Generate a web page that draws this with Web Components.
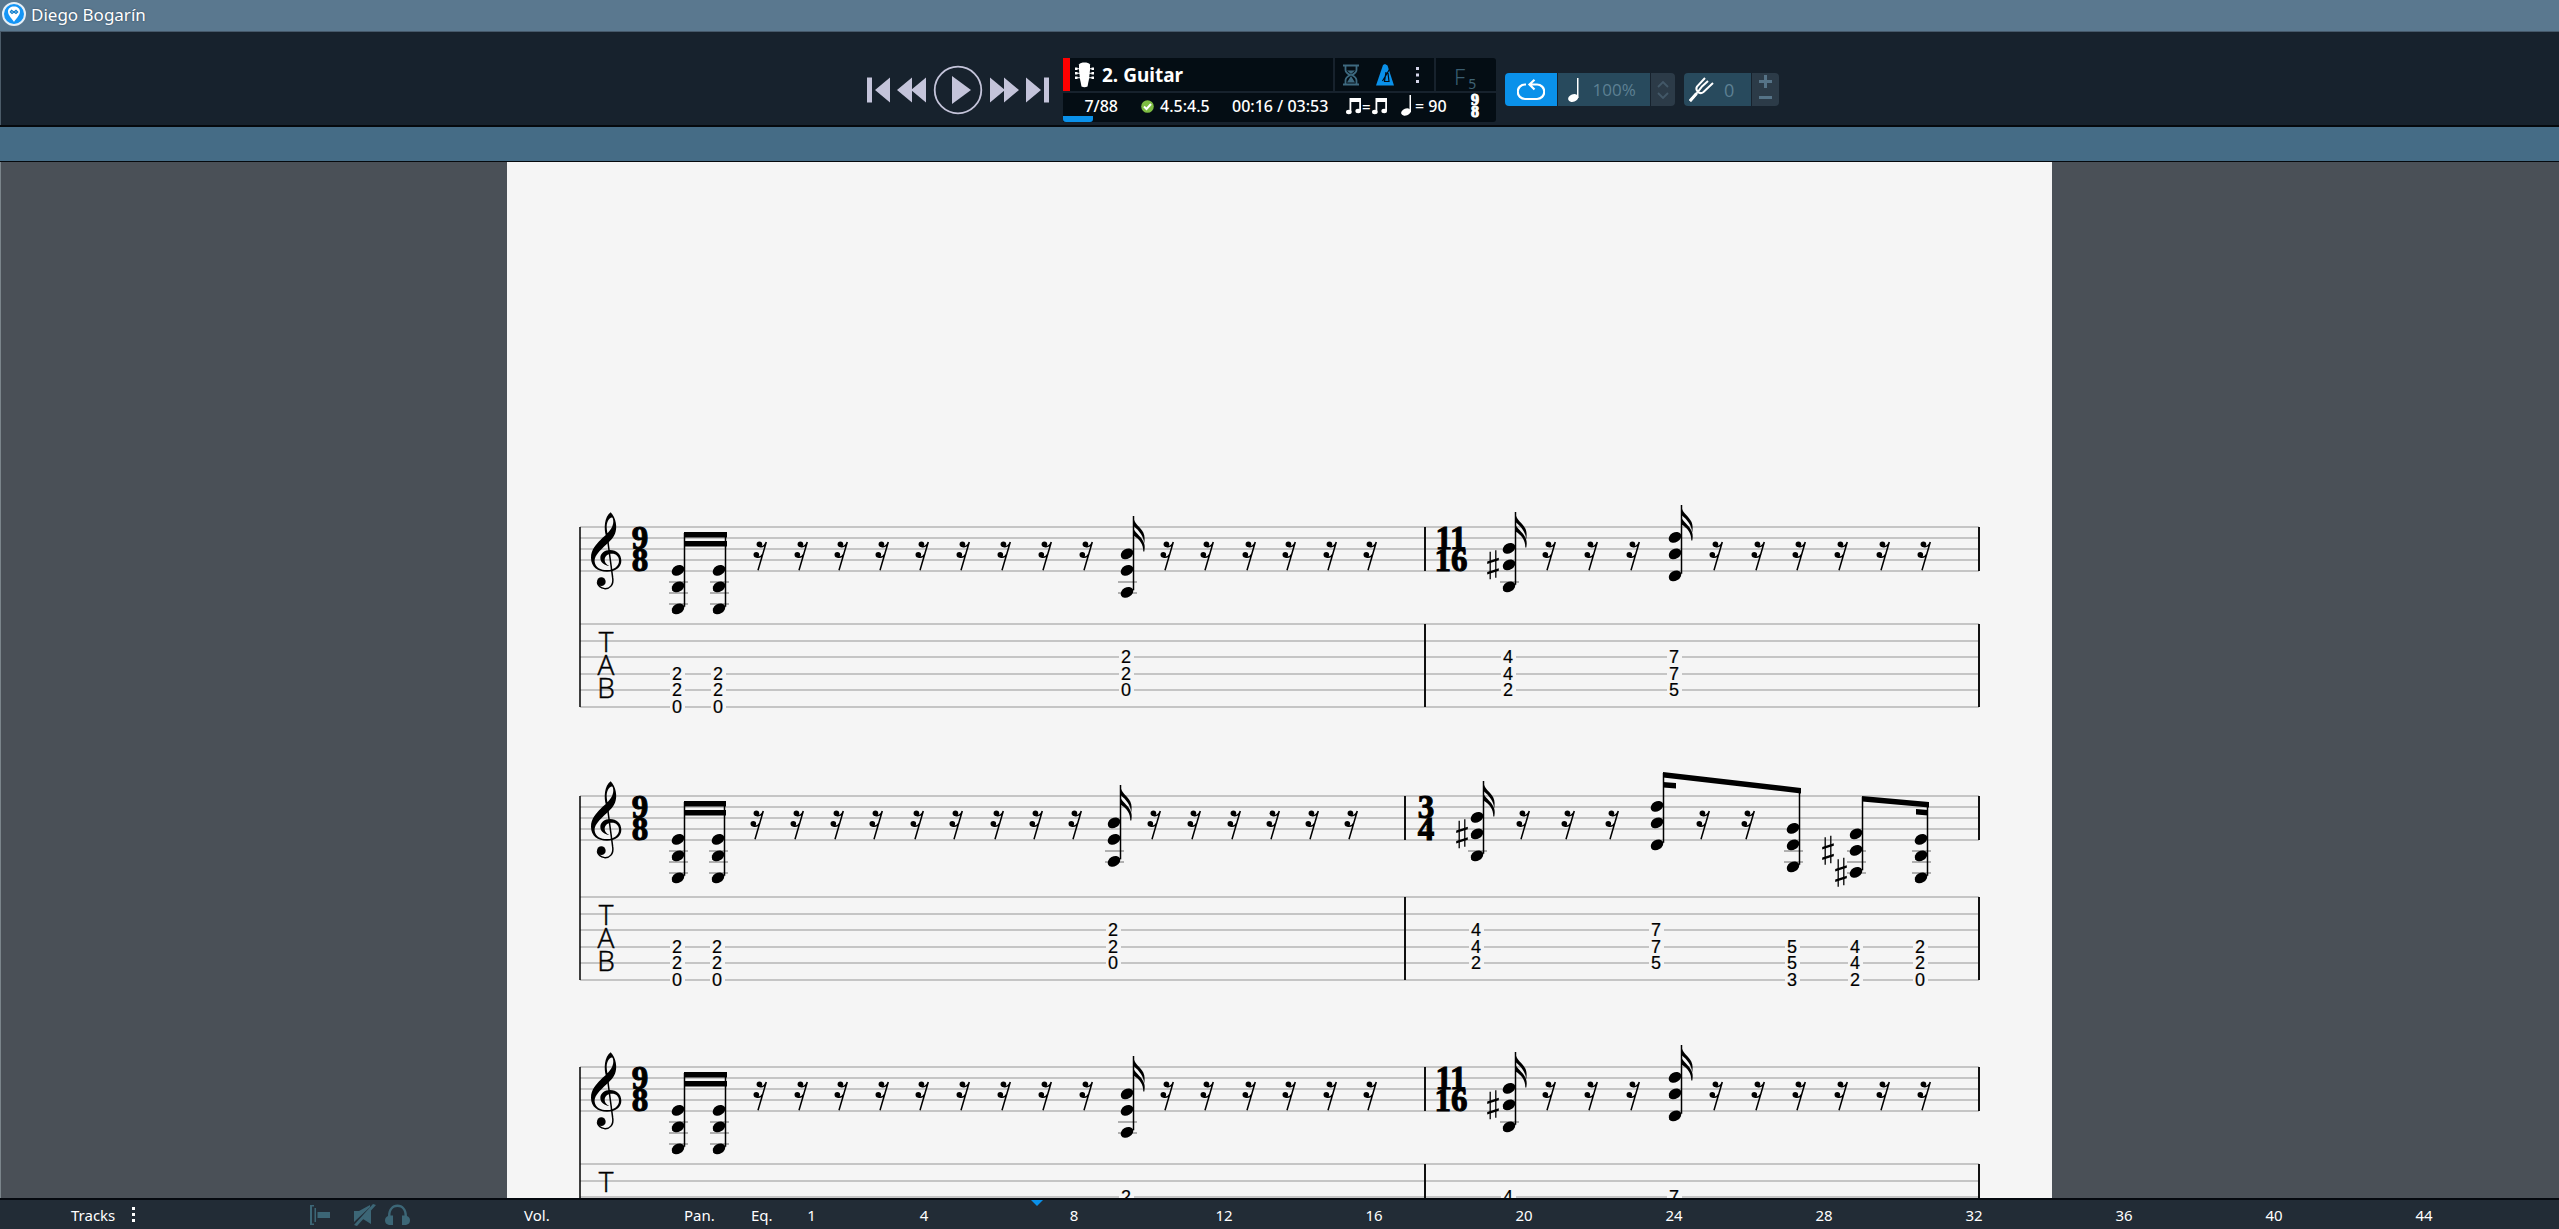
<!DOCTYPE html>
<html lang="en">
<head>
<meta charset="utf-8">
<title>Diego Bogarín</title>
<style>
html, body { margin: 0; height: 100%; }
body { font-family: "Noto Sans", "Open Sans", sans-serif; color: #fff; background: #4a5057; }
</style>
</head>
<body>
<tab-app></tab-app>
<script>
function define(name, css, html) {
  const t = document.createElement('template');
  t.innerHTML = `<style>*{box-sizing:border-box}button,input{font:inherit;color:inherit;border:0;padding:0;margin:0;background:none}svg{display:block;flex:none}${css}</style>${html}`;
  customElements.define(name, class extends HTMLElement {
    constructor() {
      super();
      this.attachShadow({ mode: 'open' }).append(t.content.cloneNode(true));
    }
  });
}

define('title-bar', `
:host { display: flex; align-items: center; gap: 5px; height: 32px; padding: 0 2px 2px; background: #5a788f; border-bottom: 1px solid #46596a; font-size: 17px; line-height: 24px; text-shadow: 0 0 2px #2c4257; }
`, `
<svg width="24" height="26" viewBox="0 0 24 26"><circle cx="12" cy="12" r="11" fill="#1495f5" stroke="#e6eff6" stroke-width="2"/><path d="M12 20C10.500 17 6 13.500 6 9.500C6 6.500 8.500 4.500 12 4.500S18 6.500 18 9.500C18 13.500 13.500 17 12 20Z" fill="#fff"/><path d="M12 10L9.500 8.300L8.300 10L10 11.500L12 10L14 8.300L15.700 10L14 11.500Z" fill="#bfe0f8" stroke="#1480cc" stroke-width="1.200"/></svg>
<slot></slot>`);

define('transport-controls', `
:host { display: flex; align-items: center; gap: 7px; height: 50px; }
button { height: 50px; cursor: pointer; }
svg { fill: #c4c4da; }
`, `
<button aria-label="First bar"><svg width="23" height="50" viewBox="0 0 23 50"><path d="M0 12.500H5V37.500H0ZM23 12.500V37.500L8 25Z"/></svg></button>
<button aria-label="Rewind"><svg width="29" height="50" viewBox="0 0 29 50"><path d="M15 12.500V37.500L0 25ZM29 12.500V37.500L14 25Z"/></svg></button>
<button aria-label="Play"><svg width="50" height="50" viewBox="0 0 50 50"><circle cx="25" cy="25" r="23.300" fill="none" stroke="#c4c4da" stroke-width="1.800"/><path d="M19 11V39L38 25Z"/></svg></button>
<button aria-label="Forward"><svg width="29" height="50" viewBox="0 0 29 50"><path d="M0 12.500V37.500L15 25ZM14 12.500V37.500L29 25Z"/></svg></button>
<button aria-label="Last bar"><svg width="23" height="50" viewBox="0 0 23 50"><path d="M0 12.500V37.500L15 25ZM18 12.500H23V37.500H18Z"/></svg></button>`);

define('track-display', `
:host { display: flex; flex-direction: column; gap: 2px; width: 433px; height: 64px; border-radius: 0 3px 3px 0; overflow: hidden; }
.row { display: flex; gap: 2px; height: 33px; }
.row > * { background: #040d14; }
.track { flex: 1; display: flex; align-items: center; gap: 7px; border-left: 7px solid #f00; padding-left: 4px; font-weight: bold; font-size: 19px; line-height: 31px; }
.track span { padding-top: 2px; }
.tools { display: flex; align-items: center; width: 99px; padding-left: 8px; gap: 17px; }
.tools button { display: block; cursor: pointer; }
.tuner { width: 60px; padding-left: 18px; font-size: 22px; line-height: 37px; height: 33px; font-weight: 300; color: #3a5d70; overflow: hidden; }
.tuner sub { font-size: 14px; vertical-align: -4px; line-height: 10px; margin-left: 3px; font-weight: 400; color: #3f6375; }
.info { position: relative; display: grid; grid-template-columns: 78px 91px 114px 55px 66px 1fr; align-items: center; height: 29px; padding-bottom: 3px; background: #040d14; font-weight: 500; font-size: 16px; line-height: 24px; }
.info > span { display: flex; align-items: center; white-space: nowrap; }
.bar { justify-content: flex-end; padding-right: 23px; }
.beat { gap: 6px; }
.tempo { gap: 3px; }
.info .eq { font-size: 15px; gap: 1px; }
.info .sig { flex-direction: column; align-items: center; width: 16px; font: bold 16px/12px "Liberation Serif", serif; -webkit-text-stroke: 1px #fff; }
.progress { position: absolute; left: 0; bottom: 0; width: 7%; height: 6px; background: #0a91ea; border-radius: 0 0 3px 3px; }
`, `
<div class="row">
  <button class="track"><svg width="21" height="26" viewBox="0 0 21 26" fill="#fff"><path d="M5 2.500C6 1 8 .5 10.500 .5S15 1 16 2.500L16 8L15 17L13.500 24.500Q10.500 26 7.500 24.500L6 17L5 8Z"/><path d="M1 5.500h2.500v2.500H1zM1 10h2.500v2.500H1zM1 14.500h2.500v2.500H1zM17.500 5.500h2.500v2.500h-2.500zM17.500 10h2.500v2.500h-2.500zM17.500 14.500h2.500v2.500h-2.500zM3 6.300h3v1H3zM3 10.800h3v1H3zM3 15.300h3v1H3zM15 6.300h3v1h-3zM15 10.800h3v1h-3zM15 15.300h3v1h-3z"/></svg><span>2. Guitar</span></button>
  <div class="tools">
    <button aria-label="Count-in"><svg width="16" height="22" viewBox="0 0 16 22" fill="none" stroke="#3e6a80" stroke-width="1.800"><path d="M0 1.500H16M0 20.500H16M2.500 2V6Q2.500 8.500 7 11Q2.500 13.500 2.500 16.500V20M13.500 2V6Q13.500 8.500 9 11Q13.500 13.500 13.500 16.500V20"/><path d="M4 6.500H12L8 10ZM8 12L12 18.500H4Z" fill="#3e6a80" stroke="none"/></svg></button>
    <button aria-label="Metronome"><svg width="18" height="22" viewBox="0 0 18 22"><path d="M7 1L9 0L11.500 1.500L18 21.500H0Z" fill="#0a91ea"/><path d="M6.500 17L14 4.500M10 8L8.500 17.500H13L12 9" stroke="#040d14" stroke-width="1.200" fill="none"/></svg></button>
    <button aria-label="Metronome options"><svg width="16" height="22" viewBox="0 0 16 22" fill="#d5d5ea"><path d="M5 3h3v3H5zM5 9.500h3v3H5zM5 16h3v3H5z"/></svg></button>
  </div>
  <div class="tuner">F<sub>5</sub></div>
</div>
<div class="info">
  <span class="bar">7/88</span>
  <span class="beat"><svg width="13" height="13" viewBox="0 0 13 13"><circle cx="6.500" cy="6.500" r="6.300" fill="#7dbb42"/><path d="M3 6.500L5.500 9L10 4" fill="none" stroke="#fff" stroke-width="2"/></svg>4.5:4.5</span>
  <span>00:16 / 03:53</span>
  <span class="eq"><svg width="15" height="18" viewBox="0 0 15 18" fill="#fff"><path d="M3.500 1H15V14H13.200V5H5.300V15.500H3.500Z"/><ellipse cx="2.800" cy="15" rx="2.800" ry="2.200"/><ellipse cx="12.200" cy="14" rx="2.800" ry="2.200"/></svg>=<svg width="15" height="18" viewBox="0 0 15 18" fill="#fff"><path d="M3.500 1H15V14H13.200V5H5.300V15.500H3.500Z"/><ellipse cx="2.800" cy="15" rx="2.800" ry="2.200"/><ellipse cx="12.200" cy="14" rx="2.800" ry="2.200"/></svg></span>
  <span class="tempo"><svg width="11" height="24" viewBox="0 0 11 24" fill="#fff"><path d="M8.500 1H10V18H8.500Z"/><ellipse cx="5" cy="18" rx="5" ry="3.400" transform="rotate(-20 5 18)"/></svg>= 90</span>
  <span class="sig"><span>9</span><span>8</span></span>
  <div class="progress"></div>
</div>`);

define('playback-tools', `
:host { display: flex; align-items: center; gap: 9px; font-size: 18px; color: #5d8093; }
.group { display: flex; gap: 1px; height: 33px; border-radius: 4px; overflow: hidden; }
.group > * { display: flex; align-items: center; justify-content: center; }
.loop { width: 52px; background: #0a91ea; cursor: pointer; }
label { background: #284a5d; }
.speed { width: 92px; gap: 14px; }
.speed input { width: 48px; }
.group .tune { width: 67px; gap: 10px; padding-left: 5px; justify-content: flex-start; }
.tune input { width: 16px; }
input { font-family: "Open Sans"; height: 33px; outline: 0; }
.speed input { font-size: 17px; }
.spin { width: 24px; background: #2c3b48; }
.pm { flex-direction: column; width: 27px; background: #2c3b48; }
.pm button { display: flex; align-items: center; justify-content: center; flex: 1; width: 27px; }
`, `
<div class="group">
  <button class="loop" aria-label="Loop"><svg width="28" height="22" viewBox="0 0 28 22" fill="none" stroke="#fff" stroke-width="2.200"><path d="M9 5.500H8A7 7 0 0 0 8 20H20A7 7 0 0 0 20 5.500H13M17.500 .800L12.500 5.500L17.500 10.500"/></svg></button>
  <label class="speed"><svg width="11" height="26" viewBox="0 0 11 26" fill="#fff"><path d="M9 1H10.500V21H9Z"/><ellipse cx="5.200" cy="21" rx="5.200" ry="3.700" transform="rotate(-20 5.200 21)"/></svg><input aria-label="Tempo" value="100%"></label>
  <button class="spin" aria-label="Change tempo"><svg width="12" height="18" viewBox="0 0 12 18" fill="none" stroke="#435868" stroke-width="1.800"><path d="M1 6L6 1L11 6M1 12L6 17L11 12"/></svg></button>
</div>
<div class="group">
  <label class="tune"><svg width="25" height="25" viewBox="0 0 25 25" fill="none" stroke="#fff" stroke-width="2"><path d="M1 24L8 16M16 1L8 9.500Q6.500 12 8.500 14.500Q11.500 17.500 14.500 15L24 6M8 16L13 9.500L19 4"/><path d="M1 24L7.500 16.500" stroke-width="3"/></svg><input aria-label="Tuning" value="0"></label>
  <div class="pm"><button aria-label="Tune up"><svg width="13" height="13" viewBox="0 0 13 13"><path d="M5 0H8V5H13V8H8V13H5V8H0V5H5Z" fill="#567387"/></svg></button><button aria-label="Tune down"><svg width="13" height="3" viewBox="0 0 13 3"><path d="M0 0H13V3H0Z" fill="#567387"/></svg></button></div>
</div>`);

define('tool-bar', `
:host { display: grid; grid-template-columns: 1fr auto 1fr; align-items: end; height: 95px; padding-bottom: 3px; background: #17222d; border-bottom: 2px solid #05090d; box-shadow: inset 1px 0 #4b5b68; }
transport-controls { justify-self: end; margin: 0 14px 7px 0; }
playback-tools { margin: 0 0 16px 9px; }
`, `<transport-controls></transport-controls><track-display></track-display><playback-tools></playback-tools>`);

/* Scores: x in sheet units, pitches in half-staff-space steps below the top line. */
const SCORES = {
  a: {
    gap: 97, height: 269, bar: 918, times: [[133, '9', '8'], [944, '11', '16']],
    rests: [253, 294, 334, 375, 415, 456, 497, 538, 579, 660, 700, 742, 782, 823, 863, 1042, 1084, 1126, 1209, 1251, 1292, 1334, 1376, 1417],
    chords: [
      { x: 171, n: [8, 11, 15], top: 6, f: ['', '', '', '2', '2', '0'] },
      { x: 212, n: [8, 11, 15], top: 6, f: ['', '', '', '2', '2', '0'] },
      { x: 620, n: [5, 8, 12], top: -11, flag: 1, f: ['', '', '2', '2', '0'] },
      { x: 1002, n: [4, 7, 11], top: -15, flag: 1, f: ['', '', '4', '4', '2'] },
      { x: 1168, n: [2, 5, 9], top: -22, flag: 1, f: ['', '', '7', '7', '5'] }],
    sharps: [[986, 7]],
    beams: [[177, 5, 220, 5], [177, 14, 220, 14]]
  },
  b: {
    gap: 101, height: 271, bar: 898, times: [[133, '9', '8'], [919, '3', '4']],
    rests: [250, 290, 330, 369, 410, 449, 490, 529, 568, 647, 687, 727, 766, 805, 844, 1016, 1061, 1105, 1196, 1241],
    chords: [
      { x: 171, n: [8, 11, 15], top: 6, f: ['', '', '', '2', '2', '0'] },
      { x: 211, n: [8, 11, 15], top: 6, f: ['', '', '', '2', '2', '0'] },
      { x: 607, n: [5, 8, 12], top: -11, flag: 1, f: ['', '', '2', '2', '0'] },
      { x: 970, n: [4, 7, 11], top: -15, flag: 1, f: ['', '', '4', '4', '2'] },
      { x: 1150, n: [2, 5, 9], top: -23, f: ['', '', '7', '7', '5'] },
      { x: 1286, n: [6, 9, 13], top: -7, f: ['', '', '', '5', '5', '3'] },
      { x: 1349, n: [7, 10, 14], top: 1, f: ['', '', '', '4', '4', '2'] },
      { x: 1414, n: [8, 11, 15], top: 7, f: ['', '', '', '2', '2', '0'] }],
    sharps: [[955, 7], [1321, 10], [1334, 14]],
    beams: [[177, 5, 219, 5], [177, 14, 219, 14], [1156, -24, 1294, -8], [1156, -14, 1169, -13], [1355, 0, 1422, 6], [1409, 13, 1421, 14]]
  }
};
const TOP = 60;
const pitchY = s => TOP + s * 5.5 - 0.7;
const rest = x => `<g transform="translate(${x} ${TOP})"><circle cx="-.6" cy="17.300" r="2.800"/><circle cx="-3.700" cy="27.700" r="2.800"/><path d="M6.300 15L-2 43.200M-.6 19.500C3 20.300 5 18.300 6 15.800M-3.700 30C0 30.800 2 28.800 3 26.800" fill="none" stroke="#000" stroke-width="1.500"/></g>`;
const sharp = ([x, s]) => `<g transform="translate(${x} ${pitchY(s)})"><path d="M-2.800 -13V14.500M2.800 -14.500V13" stroke="#000" stroke-width="1.300"/><path d="M-5.800 -3.300L5.800 -7V-4.500L-5.800 -.8ZM-5.800 7.200L5.800 3.500V6L-5.800 9.700Z"/></g>`;
const flag = (x, y) => `<path transform="translate(${x} ${y})" d="M0 2C1 8 7 11 9.800 16.500C11.500 20 11.300 24 10.700 27.500C10.300 20.500 6 15 0 10ZM0 13C3 18 8.500 21 10.500 27C11.500 30 11.300 32 10.800 35.500H9.800C10 28.500 6 23 0 19.500Z"/>`;
const CLEF = `<g transform="translate(53 33.300) scale(.33333)"><path d="M138 108C131 84 133 50 152 36C168 52 173 82 165 100C158 117 143 128 130 141C112 159 103 170 104 184C106 202 122 209 141 209C162 209 177 197 177 181C177 168 168 160 156 160C142 160 134 168 134 179C134 188 140 193 148 197C132 195 121 186 121 173C121 159 134 149 150 149C170 149 184 162 184 181C184 201 166 214 141 214C113 214 93 199 93 172C93 148 108 132 122 118C130 110 136 107 145 96C158 82 163 66 158 53C152 48 141 60 140 78C140 88 142 98 144 106Z"/><path d="M141 104L158 232C162 255 148 266 134 265C122 263 114 256 112 246" fill="none" stroke="#000" stroke-width="4.500"/><circle cx="124" cy="244" r="13"/></g>`;

function chord(c, tab, strings) {
  const low = c.n[2], sx = c.x + 6.5;
  let s = '';
  for (let l = 10; l <= low; l += 2) s += `<path d="M${c.x - 9} ${TOP + l * 5.5}h19" stroke="#999" stroke-width="1.500"/>`;
  s += `<path d="M${sx} ${TOP + c.top}V${pitchY(low) - 2}" stroke="#000" stroke-width="1.500"/>`;
  for (const n of c.n) s += `<ellipse rx="6.700" ry="4.900" transform="translate(${c.x} ${pitchY(n)}) rotate(-30)"/>`;
  if (c.flag) s += flag(sx, TOP + c.top);
  c.f.slice(0, strings).forEach((f, i) => {
    if (f) s += `<rect x="${c.x - 8}" y="${tab[i] - 6}" width="15" height="12" fill="#f5f5f5"/><text x="${c.x - 1}" y="${tab[i] + 6}" class="fret">${f}</text>`;
  });
  return s;
}

/* score: which music to draw; strings: how many tab strings carry text (default all six). */
customElements.define('score-system', class extends HTMLElement {
  constructor() { super(); this.attachShadow({ mode: 'open' }); }
  connectedCallback() {
    const d = SCORES[this.getAttribute('score')];
    const strings = +(this.getAttribute('strings') || 6);
    const tabTop = TOP + d.gap;
    const tab = [0, 17, 33, 50, 66, 83].map(v => tabTop + v);
    const lines = [0, 11, 22, 33, 44].map(v => TOP + v).concat(tab).map(y => `<path d="M73 ${y}H1472"/>`).join('');
    const text = d.times.map(([x, a, b]) => `<text class="time" x="${x}" y="${TOP + 22}">${a}</text><text class="time" x="${x}" y="${TOP + 44}">${b}</text>`).join('');
    const tabWord = ['T', 'A', 'B'].slice(0, strings / 2).map((t, i) => `<text class="tab" x="99" y="${tabTop + 28 + i * 23}">${t}</text>`).join('');
    const beams = d.beams.map(([a, b, c, e]) => `<path d="M${a} ${TOP + b}L${c} ${TOP + e}v5.500L${a} ${TOP + b + 5.5}Z"/>`).join('');
    this.shadowRoot.innerHTML = `<style>
      :host { display: block; }
      svg { display: block; width: 100%; overflow: visible; }
      text { text-anchor: middle; }
      .fret { font: 18px "Liberation Sans", Arial, sans-serif; stroke: #000; stroke-width: .2px; }
      .tab { font: 300 28px "Open Sans", sans-serif; stroke: #000; stroke-width: .5px; }
      .time { font: bold 33px "Liberation Serif", serif; stroke: #000; stroke-width: 1px; }
    </style><svg viewBox="0 0 1545 ${d.height}" role="img" aria-label="Guitar staff and tablature">
      <g stroke="#b4b4b4" stroke-width="1.600">${lines}</g>
      <path d="M73 ${TOP}V${tab[5]}" stroke="#000" stroke-width="1.500"/>
      <path d="M${d.bar} ${TOP}v44M${d.bar} ${tabTop}v83M1472 ${TOP}v44M1472 ${tabTop}v83" stroke="#111" stroke-width="2"/>
      ${CLEF}${text}${tabWord}${d.rests.map(rest).join('')}${d.sharps.map(sharp).join('')}${beams}${d.chords.map(c => chord(c, tab, strings)).join('')}
    </svg>`;
  }
});

define('score-sheet', `
:host { display: block; width: 100%; max-width: 1545px; margin: 0 auto; padding-top: 305px; background: #f5f5f5; color: #000; }
`, `<slot></slot>`);

define('track-footer', `
:host { display: flex; height: 31px; flex: none; background: #222c36; border-top: 2px solid #05090f; font-size: 15px; line-height: 29px; white-space: nowrap; overflow: hidden; }
.head { display: grid; grid-template-columns: 238px 215px 160px 67px 23px; padding: 1px 0 0 71px; flex: none; }
.tracks, .icons { display: flex; align-items: center; height: 28px; }
.tracks { gap: 17px; }
.icons svg { fill: #3c6676; }
.icons { gap: 9px; }
.ruler { position: relative; display: flex; padding-top: 1px; text-align: center; }
.ruler span { width: 150px; }
.ruler span:first-child { width: 75px; }
.ruler svg { position: absolute; left: 257px; top: 0; }
`, `
<div class="head">
  <button class="tracks">Tracks<svg width="4" height="16" viewBox="0 0 4 16" fill="#fff"><path d="M0 0h3v3H0zM0 6h3v3H0zM0 12h3v3H0z"/></svg></button>
  <span class="icons">
    <svg width="36" height="22" viewBox="0 0 36 22"><path d="M5 1H1V21H5V19.500H3V2.500H5ZM5.500 4H7V18H5.500ZM8.500 8H21V14H8.500Z"/></svg>
    <svg width="22" height="22" viewBox="0 0 22 22"><path d="M0 7H5L16 1V3L0 18ZM17 5V20L9 15ZM19 0L22 1L3 22L0 21Z"/></svg>
    <svg width="25" height="22" viewBox="0 0 25 22"><path d="M3 12C3 5 7 .5 12.500 .5S22 5 22 12Q25 13 25 16.500T21 21H17V11.500H19.500C19.500 6 17 3 12.500 3S5.500 6 5.500 11.500H8V21H4Q0 20 0 16.500T3 12Z"/></svg>
  </span>
  <span>Vol.</span><span>Pan.</span><span>Eq.</span>
</div>
<div class="ruler"><span>1</span><span>4</span><span>8</span><span>12</span><span>16</span><span>20</span><span>24</span><span>28</span><span>32</span><span>36</span><span>40</span><span>44</span><svg width="12" height="6" viewBox="0 0 12 6"><path d="M0 0H12L6 6Z" fill="#0a91ea"/></svg></div>`);

define('tab-app', `
:host { display: flex; flex-direction: column; height: 100vh; overflow: hidden; }
title-bar, tool-bar, .strip { flex: none; }
.strip { height: 35px; background: #456c86; border-bottom: 1px solid #05090d; }
main { flex: 1; min-height: 0; overflow: hidden; background: #4a5057; box-shadow: inset 1px 0 #7b858b; }
`, `
<title-bar>Diego Bogarín</title-bar>
<tool-bar></tool-bar>
<div class="strip"></div>
<main><score-sheet><score-system score="a"></score-system><score-system score="b"></score-system><score-system score="a" strings="3"></score-system></score-sheet></main>
<track-footer></track-footer>`);
</script>
</body>
</html>
